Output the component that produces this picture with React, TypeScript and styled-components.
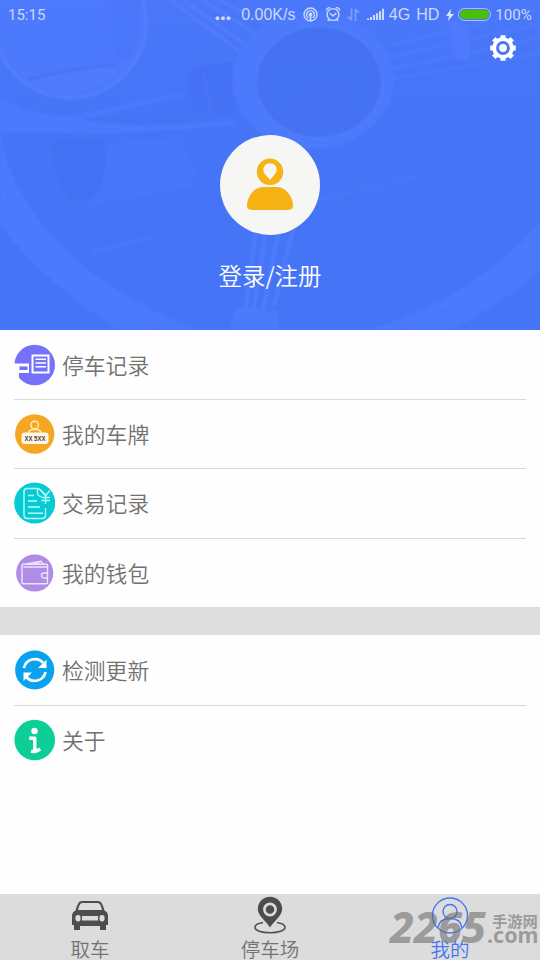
import React from "react";
import styled, { createGlobalStyle } from "styled-components";

const GlobalStyle = createGlobalStyle`
  * { box-sizing: border-box; }
  body { margin: 0; background: #fff; }
  svg { display: block; flex: none; }
`;

const Screen = styled.div`
  position: relative;
  width: 540px;
  height: 960px;
  display: flex;
  flex-direction: column;
  overflow: hidden;
  background: #fefefe;
  font-family: "Noto Sans CJK SC", "Noto Sans", sans-serif;
  font-weight: 350;
`;

const Header = styled.header`
  position: relative;
  isolation: isolate;
  height: 330px;
  flex: none;
  display: flex;
  flex-direction: column;
  align-items: center;
  background: #4674f6;
  overflow: hidden;
`;

const Backdrop = styled.svg`
  position: absolute;
  inset: 0;
  z-index: -1;
`;

const StatusBar = styled.div`
  width: 100%;
  height: 29px;
  padding: 0 8px;
  display: flex;
  align-items: center;
  justify-content: space-between;
  color: #ccd8fd;
`;

const StatusGroup = styled.div`
  display: flex;
  align-items: center;
`;

const StatusText = styled.span<{ $size?: number; $gap?: number; $face?: string }>`
  font: 400 ${(p) => p.$size ?? 16}px/20px ${(p) => p.$face ?? '"Liberation Sans"'}, sans-serif;
  margin-right: ${(p) => p.$gap ?? 0}px;
  white-space: nowrap;
`;

const Battery = styled.div`
  width: 33px;
  height: 13px;
  margin: 0 4px 0 3px;
  border: 1px solid #a9c4ee;
  border-radius: 7px;
  padding: 1px;
  &::before {
    content: "";
    display: block;
    height: 9px;
    border-radius: 5px;
    background: #48bf08;
  }
`;

const SettingsButton = styled.button`
  align-self: flex-end;
  margin: 5px 23px 0 0;
  padding: 0;
  border: 0;
  background: none;
`;

const Avatar = styled.div`
  width: 100px;
  height: 100px;
  margin-top: 73px;
  border-radius: 50%;
  background: #f6f6f5;
  flex: none;
`;

const LoginLabel = styled.div`
  margin-top: 22px;
  font-size: 23.5px;
  line-height: 36px;
  color: #fff;
`;

const Group = styled.section`
  padding: 0 14px;
`;

const Row = styled.div`
  height: 69.2px;
  display: flex;
  align-items: center;
  gap: 7px;
  color: #717171;
  font-size: 21.8px;
  line-height: 32px;
  & + & {
    border-top: 1px solid #d8d8d8;
  }
`;

const Divider = styled.div`
  height: 28.6px;
  background: #dedede;
`;

const TabBar = styled.nav`
  margin-top: auto;
  height: 66px;
  display: grid;
  grid-template-columns: repeat(3, 1fr);
  background: #dcdcdc;
`;

const Tab = styled.div<{ $active?: boolean }>`
  display: flex;
  flex-direction: column;
  align-items: center;
  color: ${(p) => (p.$active ? "#4674f6" : "#737373")};
  font-size: 19.5px;
  line-height: 22px;
  svg { margin-top: 2px; height: 40px; margin-bottom: 2px; }
`;

const Watermark = styled.div`
  position: absolute;
  left: 390px;
  top: 905px;
  display: flex;
  color: rgba(105, 105, 105, 0.58);
`;

const WatermarkNumber = styled.span`
  width: 97px;
  font: italic 800 42.5px/43px "Noto Sans", sans-serif;
`;

const WatermarkSite = styled.span`
  display: flex;
  flex-direction: column;
  width: 53px;
`;

const SiteName = styled.span`
  margin: 8px 0 0 5px;
  font: 700 15.3px/14px "Noto Sans CJK SC", sans-serif;
  white-space: nowrap;
`;

const SiteDomain = styled.span`
  margin-top: 1px;
  font: 700 21.5px/14px "Noto Sans", sans-serif;
`;

const HeaderBackdrop = () => (
  <Backdrop width="540" height="330" viewBox="0 0 540 330" fill="none">
    <defs>
      <linearGradient id="light" x1="0" y1="0" x2="0" y2="1">
        <stop offset="0" stopColor="#527dff" />
        <stop offset="1" stopColor="#4674f6" stopOpacity="0" />
      </linearGradient>
      <filter id="soft"><feGaussianBlur stdDeviation="0.9" /></filter>
    </defs>
    <rect width="540" height="170" fill="url(#light)" opacity=".4" />
    <g filter="url(#soft)" opacity=".75">
      <circle cx="70" cy="22" r="76" fill="#507cff" stroke="#5984ff" strokeWidth="3" />
      <path d="M28 80Q68 67 117 65L118 74Q90 92 60 94Q38 90 28 80Z" fill="#537dfe" />
      <path d="M27 80Q70 68 116 65" stroke="#456ff0" strokeWidth="2" />
      <path d="M112 0Q108 30 117 58L130 60Q142 32 140 0Z" fill="#4b76fa" />
      <path d="M0 96Q30 118 75 115L182 92L184 96L82 120Q130 129 200 123L235 119V126L110 134L0 132Z" fill="#507cff" />
      <path d="M82 117Q130 125 200 119L232 114" stroke="#4470f0" strokeWidth="2" opacity=".4" />
      <path d="M52 142Q77 135 101 140Q110 166 103 190Q92 203 75 202Q54 190 52 142Z" fill="#4371f3" />
      <path d="M108 142L180 138L198 172L190 188L82 207Q106 193 108 142Z" fill="#4a77fa" />
      <path d="M90 251L160 233L153 238L91 255Z" fill="#4c79fb" />
      <path d="M192 66L235 62V115H198Q185 100 192 66Z" fill="#4471f4" />
      <path d="M204 75L212 115M195 65L234 59" stroke="#4d78fa" strokeWidth="2" />
      <path d="M170 0L238 50M184 0L243 43M202 0L258 35M218 0L275 28" stroke="#5580ff" strokeWidth="3" />
      <path d="M390 46L540 8M386 58L540 24M388 70L540 38M386 80L540 53" stroke="#507bff" strokeWidth="2.5" />
      <path d="M448 20L466 24L471 55Q465 65 456 58Z" fill="#527cff" />
      <ellipse cx="313" cy="80" rx="81" ry="69" fill="#507bff" />
      <ellipse cx="319" cy="82" rx="63" ry="56" fill="#4570f2" stroke="#5580ff" strokeWidth="2" />
      <path d="M302 105V133M311 98V137M321 81V128M330 80V134M341 85V130M349 94V120" stroke="#4974f5" strokeWidth="3" opacity=".65" />
      <path d="M0 132Q8 183 48 231Q94 287 196 330H118Q42 281 0 225Z" fill="#507cff" />
      <path d="M5 187Q35 258 158 330" stroke="#4b77fa" strokeWidth="1.5" />
      <path d="M540 222Q473 299 367 330H451Q502 305 540 271Z" fill="#507cff" />
      <path d="M540 239Q486 300 398 330" stroke="#4b77fa" strokeWidth="1.5" />
      <path d="M256 230L246 308M266 230L254 309M279 230L263 309M294 225L274 306" stroke="#527eff" strokeWidth="4" />
      <path d="M237 306L278 312L280 330H229Z" fill="#4f7bfe" />
      <path d="M318 199Q355 193 425 174" stroke="#4b78fa" strokeWidth="3" />
    </g>
  </Backdrop>
);

const StatusIcons = () => (
  <svg width="84" height="20" viewBox="0 0 84 20" fill="none" stroke="currentColor" strokeWidth="1.4">
    <circle cx="7.5" cy="9.5" r="6.5" />
    <path d="M5.3 13A4 4 0 1 1 9.7 13" />
    <circle cx="7.5" cy="9.5" r="1.3" fill="currentColor" />
    <path d="M7.5 10.5V16" strokeWidth="1.8" />
    <circle cx="30" cy="9.5" r="5.9" />
    <path d="M26.8 8.2L30 10.8L33.5 8M23.4 5.3A3 3 0 0 1 27 2.8M33 2.8A3 3 0 0 1 36.7 5.3M26.3 14L24.8 16M33.7 14L35.2 16" />
    <path d="M48.5 3.5V15M45 11.5L48.5 15M52.5 16V4M52.5 4L56 8" opacity=".4" strokeWidth="1.8" />
    <path d="M65 15V13.4M68 15V12M71 15V10M74 15V8.2M77 15V6.2M80 15V3.8" strokeWidth="2.1" />
  </svg>
);

const GearIcon = () => (
  <svg width="28" height="28" viewBox="0 0 28 28" fill="none" stroke="#fff">
    <circle cx="14" cy="14" r="8.8" strokeWidth="3.8" />
    <path d="M14 1.2V5M14 23V26.8M1.2 14H5M23 14H26.8M4.8 4.8L7.5 7.5M20.5 20.5L23.2 23.2M4.8 23.2L7.5 20.5M20.5 7.5L23.2 4.8" strokeWidth="5" />
    <circle cx="14" cy="14" r="3.9" fill="#fff" stroke="none" />
  </svg>
);

const AvatarIcon = () => (
  <svg width="100" height="100" viewBox="0 0 100 100">
    <circle cx="50" cy="36.8" r="13.2" fill="#f7b314" />
    <path d="M50 45C47 41 43.3 38.5 43.3 34.5A6.7 6.3 0 0 1 56.7 34.5C56.7 38.5 53 41 50 45Z" fill="#f6f6f5" />
    <path d="M27 69C29 58 36 52 43 52H57C65 52 72 60 73 69Q74 75 67 75H33Q26 75 27 69Z" fill="#f7b314" />
  </svg>
);

const Disc = ({ color, r = 20, children }: { color: string; r?: number; children: React.ReactNode }) => (
  <svg width="41" height="42" viewBox="0 0 41 42" fill="none" stroke="#fff" strokeWidth="1.4">
    <circle cx="20.7" cy="21" r={r} fill={color} stroke="none" />
    {children}
  </svg>
);

const RecordIcon = () => (
  <Disc color="#7571fb" r={20.3}>
    <path d="M0 19.5H15V29H5V42H0Z" fill="#fefefe" stroke="none" />
    <path d="M5.5 22.4H13.5V26H5.5Z" fill="#7571fb" stroke="none" />
    <path d="M18.5 11.5H34.5V28.5H18.5Z" fill="#7571fb" strokeWidth="2" />
    <path d="M21.5 15.2H32M21.5 19H32M21.5 22.8H32" strokeWidth="1.4" />
  </Disc>
);

const PlateIcon = () => (
  <Disc color="#f5a623" r={19.7}>
    <circle cx="20.7" cy="12" r="3.8" stroke="#ffedbe" />
    <path d="M14.5 19.5Q15 17 18.5 16.5H23Q26.5 17 27 19.5" stroke="#ffedbe" />
    <rect x="7.5" y="19.5" width="27" height="11.5" rx="3" fill="#fff8e9" stroke="none" />
    <text x="10.4" y="27.6" textLength="21" lengthAdjust="spacingAndGlyphs" fill="#4b4436" stroke="none" fontFamily="Liberation Sans, sans-serif" fontWeight="700" fontSize="6.6">XX 5XX</text>
  </Disc>
);

const TradeIcon = () => (
  <Disc color="#06cbd3" r={20.5}>
    <g stroke="#baffff">
      <path d="M24.5 6.5H13Q10 6.5 10 9.5V33Q10 36.5 13.5 36.5H28Q31.5 36.5 31.5 33V26M24.5 6.5L32 13M23.5 7V11Q24 14.5 27.5 14.5M14 13.5H20M14 19H23M14 25H26M14 31.2H29" />
      <path d="M26.5 8L31.5 14L35.8 8.5M31.5 14V22M27.5 15.5H36M27.5 18.5H36" strokeWidth="1.4" />
    </g>
  </Disc>
);

const WalletIcon = () => (
  <Disc color="#b08ce7" r={18.6}>
    <g stroke="#eee4ff">
      <rect x="8" y="12.2" width="25.5" height="19.6" rx="1" />
      <path d="M12 12L27 9.3L29 12M20 12L25.5 10.4M9.5 15H33M33 21H30A2.5 2.5 0 0 0 30 26H33" />
    </g>
  </Disc>
);

const RefreshIcon = () => (
  <Disc color="#0aa2ee" r={19.6}>
    <path d="M10 19A11 11 0 0 1 29 13.8M31.5 23A11 11 0 0 1 12.4 28" strokeWidth="2.7" />
    <path d="M32.5 10.5V19H24ZM9.5 32V23.5H18Z" fill="#fff" stroke="none" />
  </Disc>
);

const InfoIcon = () => (
  <Disc color="#0bcf97" r={20.3}>
    <circle cx="20.5" cy="12" r="3.2" fill="#fff" stroke="none" />
    <path d="M15.2 19.2H20.8V32.2M17 32.4Q22 33 26.2 30" strokeWidth="3.4" strokeLinejoin="round" />
  </Disc>
);

const CarIcon = () => (
  <svg width="40" height="40" viewBox="0 0 40 40">
    <path d="M9 6Q10 5 13 5H27Q30 5 31 6Q33 9 34.5 14.5Q38 16 38 20V29H36V34H30V30H10V34H4V29H2V20Q2 16 5.5 14.5Q7 9 9 6Z" fill="#4d4d4d" />
    <path d="M10.5 7.8Q11 7 13 7H27Q29 7 29.5 7.8Q31.5 10 32 14H8Q8.5 10 10.5 7.8ZM12 20H28V24.5H12Z" fill="#dcdcdc" />
    <ellipse cx="8" cy="22.2" rx="2.6" ry="3.2" fill="#dcdcdc" />
    <ellipse cx="32" cy="22.2" rx="2.6" ry="3.2" fill="#dcdcdc" />
  </svg>
);

const PinIcon = () => (
  <svg width="40" height="40" viewBox="0 0 40 40" fill="none">
    <path d="M13 26.5C7 27.5 5 29.5 5 31.3C5 34.7 11.5 36.8 20 36.8S35 34.7 35 31.3C35 29.5 33 27.5 27 26.5" stroke="#4d4d4d" strokeWidth="1.6" />
    <path d="M20 31.5C17 26 7.8 20 7.8 13A12.2 12.2 0 0 1 32.2 13C32.2 20 23 26 20 31.5Z" fill="#4d4d4d" />
    <circle cx="20" cy="13.5" r="5.6" fill="#4d4d4d" stroke="#dcdcdc" strokeWidth="2.6" />
  </svg>
);

const ProfileIcon = () => (
  <svg width="40" height="40" viewBox="0 0 40 40" fill="none" stroke="#4674f6" strokeWidth="1.4">
    <circle cx="20" cy="19.5" r="17.5" />
    <circle cx="20" cy="15.5" r="7" />
    <path d="M8 32Q9 22.5 20 22.5T32 32" />
  </svg>
);

export default function App() {
  return (
    <>
      <GlobalStyle />
      <Screen>
        <Header>
          <HeaderBackdrop />
          <StatusBar>
            <StatusText $size={15} $face="Roboto">15:15</StatusText>
            <StatusGroup>
              <svg width="26" height="20" viewBox="0 0 26 20" fill="currentColor">
                <circle cx="2.5" cy="13.3" r="2" /><circle cx="8" cy="13.3" r="2" /><circle cx="13.5" cy="13.3" r="2" />
              </svg>
              <StatusText $gap={8}>0.00K/s</StatusText>
              <StatusIcons />
              <StatusText $gap={6}>&#8202;4G</StatusText>
              <StatusText $gap={6}>HD</StatusText>
              <svg width="10" height="14" viewBox="0 0 10 14" fill="#dce6ff"><path d="M6 1L1 8H4L3 13L9 6H5.5Z" /></svg>
              <Battery />
              <StatusText $size={15.2} $face="Roboto">100%</StatusText>
            </StatusGroup>
          </StatusBar>
          <SettingsButton aria-label="设置"><GearIcon /></SettingsButton>
          <Avatar><AvatarIcon /></Avatar>
          <LoginLabel>登录/注册</LoginLabel>
        </Header>
        <Group>
          <Row><RecordIcon />停车记录</Row>
          <Row><PlateIcon />我的车牌</Row>
          <Row><TradeIcon />交易记录</Row>
          <Row><WalletIcon />我的钱包</Row>
        </Group>
        <Divider />
        <Group>
          <Row><RefreshIcon />检测更新</Row>
          <Row><InfoIcon />关于</Row>
        </Group>
        <TabBar>
          <Tab><CarIcon />取车</Tab>
          <Tab><PinIcon />停车场</Tab>
          <Tab $active><ProfileIcon />我的</Tab>
        </TabBar>
        <Watermark>
          <WatermarkNumber>2265</WatermarkNumber>
          <WatermarkSite>
            <SiteName>手游网</SiteName>
            <SiteDomain>.com</SiteDomain>
          </WatermarkSite>
        </Watermark>
      </Screen>
    </>
  );
}
